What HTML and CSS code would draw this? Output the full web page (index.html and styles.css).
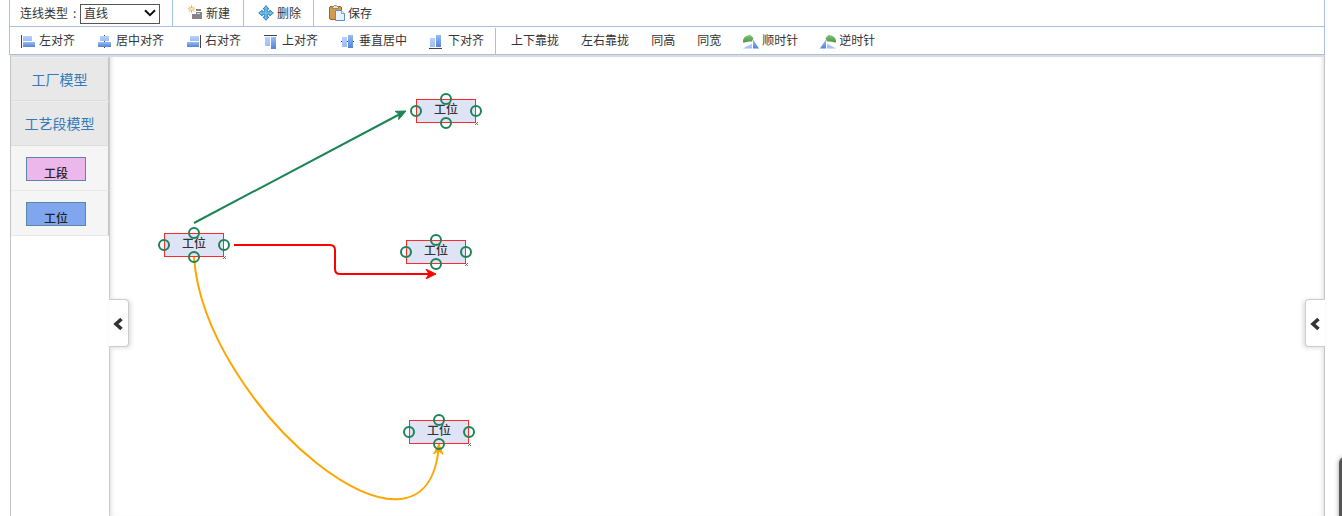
FILE: index.html
```html
<!DOCTYPE html>
<html lang="zh-CN">
<head>
<meta charset="utf-8">
<title>工艺建模</title>
<link rel="stylesheet" href="styles.css">
</head>
<body>
<svg class="defs" width="0" height="0">
  <defs>
    <linearGradient id="lt" x1="0" y1="0" x2="0" y2="1"><stop offset="0" stop-color="#b5d1ff"/><stop offset="1" stop-color="#9bbdf5"/></linearGradient>
    <linearGradient id="dk" x1="0" y1="0" x2="0" y2="1"><stop offset="0" stop-color="#98bbf5"/><stop offset="1" stop-color="#5584d6"/></linearGradient>
    <linearGradient id="gr" x1="0" y1="0" x2="0" y2="1"><stop offset="0" stop-color="#8cc878"/><stop offset="1" stop-color="#429747"/></linearGradient>
  </defs>
</svg>
<div class="app">
  <div class="bar bar-top">
    <div class="type"><span class="label">连线类型<span class="colon">:</span></span><div class="select"><span>直线</span><svg width="12" height="8" viewBox="0 0 12 8"><path d="M1 1.200l5 5 5-5" fill="none" stroke="#111" stroke-width="2"/></svg></div></div>
    <div class="btn new"><svg width="16" height="16" viewBox="0 0 16 16"><path d="M3.500 .5v7M0 4h7M1 1.500l5 5M6 1.500l-5 5" stroke="#e9a83c"/><circle cx="3.500" cy="4" r="1.300" fill="#fff0b8"/><path d="M8 4h5v2H8zM8 7h6v7H4V9h4z" fill="#858585"/><path d="M9 8.500h3" stroke="#ddd"/></svg><span>新建</span></div>
    <div class="btn del"><svg width="16" height="16" viewBox="0 0 16 16"><path d="M8 .7l3 3.300H9.300v2.700h2.500V5L15.300 8l-3.500 3V9.300H9.300v2.700H11L8 15.300 5 12h1.700V9.300H4.200V11L.7 8l3.500-3v1.700h2.500V4H5z" fill="#6dbdec" stroke="#2b7cb8" stroke-width=".9"/></svg><span>删除</span></div>
    <div class="btn save"><svg width="16" height="16" viewBox="0 0 16 16"><rect x=".5" y="1.500" width="12" height="13" rx="1.500" fill="#d59b4c" stroke="#9c6423"/><path d="M3.500 3.500v-2h1.200L5.500.5h2l.8 1h1.200v2z" fill="#e9e4da" stroke="#8c7655" stroke-width=".8"/><path d="M6.500 5.500h6l3 3v7h-9z" fill="#e7f3ff" stroke="#5a8fc9"/><path d="M12.500 5.500v3h3" fill="#fff" stroke="#5a8fc9" stroke-width=".8"/></svg><span>保存</span></div>
  </div>
  <div class="bar bar-align">
    <div class="btn"><svg width="16" height="16" viewBox="0 0 16 16"><path d="M1.500 2v13" stroke="#444"/><rect x="3" y="3" width="9" height="5" fill="url(#lt)"/><rect x="3" y="9" width="12" height="5" fill="url(#dk)"/></svg><span>左对齐</span></div>
    <div class="btn"><svg width="16" height="16" viewBox="0 0 16 16"><path d="M7.500 2v13" stroke="#444"/><rect x="3" y="3" width="9" height="5" fill="url(#lt)"/><rect x="1" y="9" width="13" height="5" fill="url(#dk)"/></svg><span>居中对齐</span></div>
    <div class="btn"><svg width="16" height="16" viewBox="0 0 16 16"><path d="M14.500 2v13" stroke="#444"/><rect x="4" y="3" width="9" height="5" fill="url(#lt)"/><rect x="1" y="9" width="12" height="5" fill="url(#dk)"/></svg><span>右对齐</span></div>
    <div class="btn"><svg width="16" height="16" viewBox="0 0 16 16"><path d="M1 2.500h13" stroke="#444"/><rect x="2" y="4" width="5" height="9" fill="url(#lt)"/><rect x="8" y="4" width="5" height="12" fill="url(#dk)"/></svg><span>上对齐</span></div>
    <div class="btn"><svg width="16" height="16" viewBox="0 0 16 16"><path d="M1 8.500h13" stroke="#444"/><rect x="2" y="4" width="5" height="10" fill="url(#lt)"/><rect x="8" y="2" width="5" height="13" fill="url(#dk)"/></svg><span>垂直居中</span></div>
    <div class="btn"><svg width="16" height="16" viewBox="0 0 16 16"><path d="M0 15.500h13" stroke="#444"/><rect x="1" y="5" width="5" height="9" fill="url(#lt)"/><rect x="7" y="2" width="5" height="12" fill="url(#dk)"/></svg><span>下对齐</span></div>
    <div class="sep"></div>
    <div class="btn"><span>上下靠拢</span></div>
    <div class="btn"><span>左右靠拢</span></div>
    <div class="btn"><span>同高</span></div>
    <div class="btn"><span>同宽</span></div>
    <div class="btn"><svg width="16" height="16" viewBox="0 0 16 16"><path d="M0 9.500C-.5 5 3 2.500 5.500 2.500L7 1.500 10.500 5 9 8.500 7.500 8.500C5 8 2 9.500 0 9.500z" fill="url(#gr)"/><path d="M10 15.500V6.500L16 15.500z" fill="url(#dk)"/><path d="M0 15.500l9-5v5z" fill="url(#lt)"/></svg><span>顺时针</span></div>
    <div class="btn"><svg width="16" height="16" viewBox="0 0 16 16"><path d="M16 9.500C16.500 5 13 2.500 10.500 2.500L9 1.500 5.500 5 7 8.500 8.500 8.500C11 8 14 9.500 16 9.500z" fill="url(#gr)"/><path d="M6 15.500V6.500L0 15.500z" fill="url(#dk)"/><path d="M16 15.500l-9-5v5z" fill="url(#lt)"/></svg><span>逆时针</span></div>
  </div>
  <div class="work">
    <aside class="side">
      <div class="group first">工厂模型</div>
      <div class="group">工艺段模型</div>
      <div class="entry"><div class="shape pink">工段</div></div>
      <div class="entry"><div class="shape blue">工位</div></div>
    </aside>
    <main class="canvas"></main>
  </div>
</div>
<div class="stage">
  <div class="node n1">工位</div>
  <div class="node n2">工位</div>
  <div class="node n3">工位</div>
  <div class="node n4">工位</div>
  <svg class="wires" width="1342" height="516" viewBox="0 0 1342 516" fill="none">
    <g stroke-width="2">
      <path d="M194 223L402 113" stroke="#1c8455"/>
      <path d="M234 245h96q5 0 5 5v19q0 5 5 5h92" stroke="#f00"/>
      <path d="M194 257C204 407 429 594 439 444" stroke="#ffa500"/>
    </g>
    <path d="M406 111l-7.300 8.500 .5-5.200-4-3z" fill="#1c8455" stroke="#1c8455"/>
    <path d="M436 274l-10-4.800 3 4.800-3 4.800z" fill="#f00" stroke="#f00"/>
    <path d="M439 444l-5.500 10 5.200-3.200 4.300 3.600z" fill="#ffa500" stroke="#ffa500"/>
    <g stroke="#1c8455" stroke-width="2">
      <circle cx="194" cy="233" r="5"/><circle cx="164" cy="245" r="5"/><circle cx="224" cy="245" r="5"/><circle cx="194" cy="257" r="5"/>
      <circle cx="446" cy="99" r="5"/><circle cx="416" cy="111" r="5"/><circle cx="476" cy="111" r="5"/><circle cx="446" cy="123" r="5"/>
      <circle cx="436" cy="240" r="5"/><circle cx="406" cy="252" r="5"/><circle cx="466" cy="252" r="5"/><circle cx="436" cy="264" r="5"/>
      <circle cx="439" cy="420" r="5"/><circle cx="409" cy="432" r="5"/><circle cx="469" cy="432" r="5"/><circle cx="439" cy="444" r="5"/>
    </g>
    <path d="M223 256l3 3m0-3l-3 3M475 122l3 3m0-3l-3 3M465 263l3 3m0-3l-3 3M468 443l3 3m0-3l-3 3" stroke="#555" stroke-width=".8"/>
  </svg>
  <div class="tab tab-left"><svg width="10" height="14" viewBox="0 0 10 14"><path d="M8.500 2L3 7l5.500 5" fill="none" stroke="#333" stroke-width="3.600"/></svg></div>
  <div class="tab tab-right"><svg width="10" height="14" viewBox="0 0 10 14"><path d="M8.500 2L3 7l5.500 5" fill="none" stroke="#333" stroke-width="3.600"/></svg></div>
  <div class="dock"></div>
</div>
</body>
</html>
```
FILE: styles.css
```css
* { box-sizing: border-box; }
body {
  margin: 0;
  height: 516px;
  overflow: hidden;
  position: relative;
  background: #fff;
  color: #333;
  font: 12px/16px "Noto Sans CJK SC", sans-serif;
}
svg { display: block; flex: none; }
.defs { position: absolute; }
.app { width: 1316px; height: 516px; margin-left: 9px; display: flex; flex-direction: column; }
.bar { display: flex; border: 1px solid #a9bfe0; border-top: 0; white-space: nowrap; flex: none; }
.bar-top { height: 27px; }
.bar-align { height: 28px; padding-top: 1px; }
.btn { display: flex; align-items: center; gap: 3px; padding: 0 11px; }
.bar-align .btn { padding-bottom: 1px; }
.bar-align .btn:first-child { padding-left: 10px; }
.bar-align .btn span { padding-bottom: 1px; }
.sep { width: 1px; background: #9fc1ee; margin-right: 4px; }
.type { display: flex; width: 162px; padding-left: 10px; align-items: center; }
.label { width: 60px; }
.colon { padding-left: 5px; }
.select { width: 80px; height: 20px; margin-top: 1px; border: 1px solid #555; display: flex; align-items: center; justify-content: space-between; padding: 0 3px 1px; }
.bar-top .btn { border-left: 1px solid #9fc1ee; gap: 2px; padding: 0 0 1px 15px; }
.new { width: 71px; }
.del { width: 70px; }
.bar-top .del { padding-left: 14px; gap: 3px; }
.bar-top .save { gap: 3px; }
.work { flex: 1; display: flex; margin-left: 1px; border: 1px solid #c4c4c4; border-top: 2px solid #dcdcdc; border-bottom: 0; }
.side { width: 98px; }
.group { height: 45px; background: #e8e8e8; border-bottom: 1px solid #dcdcdc; border-top: 1px solid #eee; border-right: 1px solid #c4c4c4; color: #337ab7; font-size: 14px; line-height: 43px; text-align: center; }
.first { height: 44px; line-height: 42px; }
.entry { height: 45px; background: #f5f5f5; border-bottom: 1px solid #e9e9e9; border-right: 1px solid #c4c4c4; padding: 11px 15px 9px; }
.shape { width: 60px; height: 24px; border: 1px solid #5b87a5; line-height: 29px; text-align: center; font-weight: 500; color: #222; }
.pink { background: #ecb7ea; }
.blue { background: #80a6ef; }
.canvas { flex: 1; border-left: 1px solid #ccc; box-shadow: inset 5px 0 5px -4px #ddd, inset -5px 0 5px -4px #ddd; }
.stage { position: absolute; inset: 0; pointer-events: none; }
.wires { position: absolute; left: 0; top: 0; }
.node { position: absolute; width: 60px; height: 24px; border: 1px solid #ff2929; background: #dfe3f6; text-align: center; line-height: 17px; font-weight: 500; }
.n1 { left: 416px; top: 99px; }
.n2 { left: 164px; top: 233px; }
.n3 { left: 406px; top: 240px; }
.n4 { left: 409px; top: 420px; }
.tab { position: absolute; top: 299px; width: 20px; height: 48px; border: 1px solid #ccc; background: #fff; display: flex; align-items: center; justify-content: center; padding: 2px 1px 0 0; }
.tab-left { left: 109px; border-left: 0; border-radius: 0 4px 4px 0; box-shadow: 2px 1px 4px #ddd; }
.tab-right { left: 1305px; border-right: 0; border-radius: 4px 0 0 4px; box-shadow: -2px 1px 4px #ddd; padding-right: 2px; }
.dock { position: absolute; left: 1339px; top: 457px; width: 12px; height: 70px; background: #555; border-radius: 6px; box-shadow: 0 0 5px #999; }
```
